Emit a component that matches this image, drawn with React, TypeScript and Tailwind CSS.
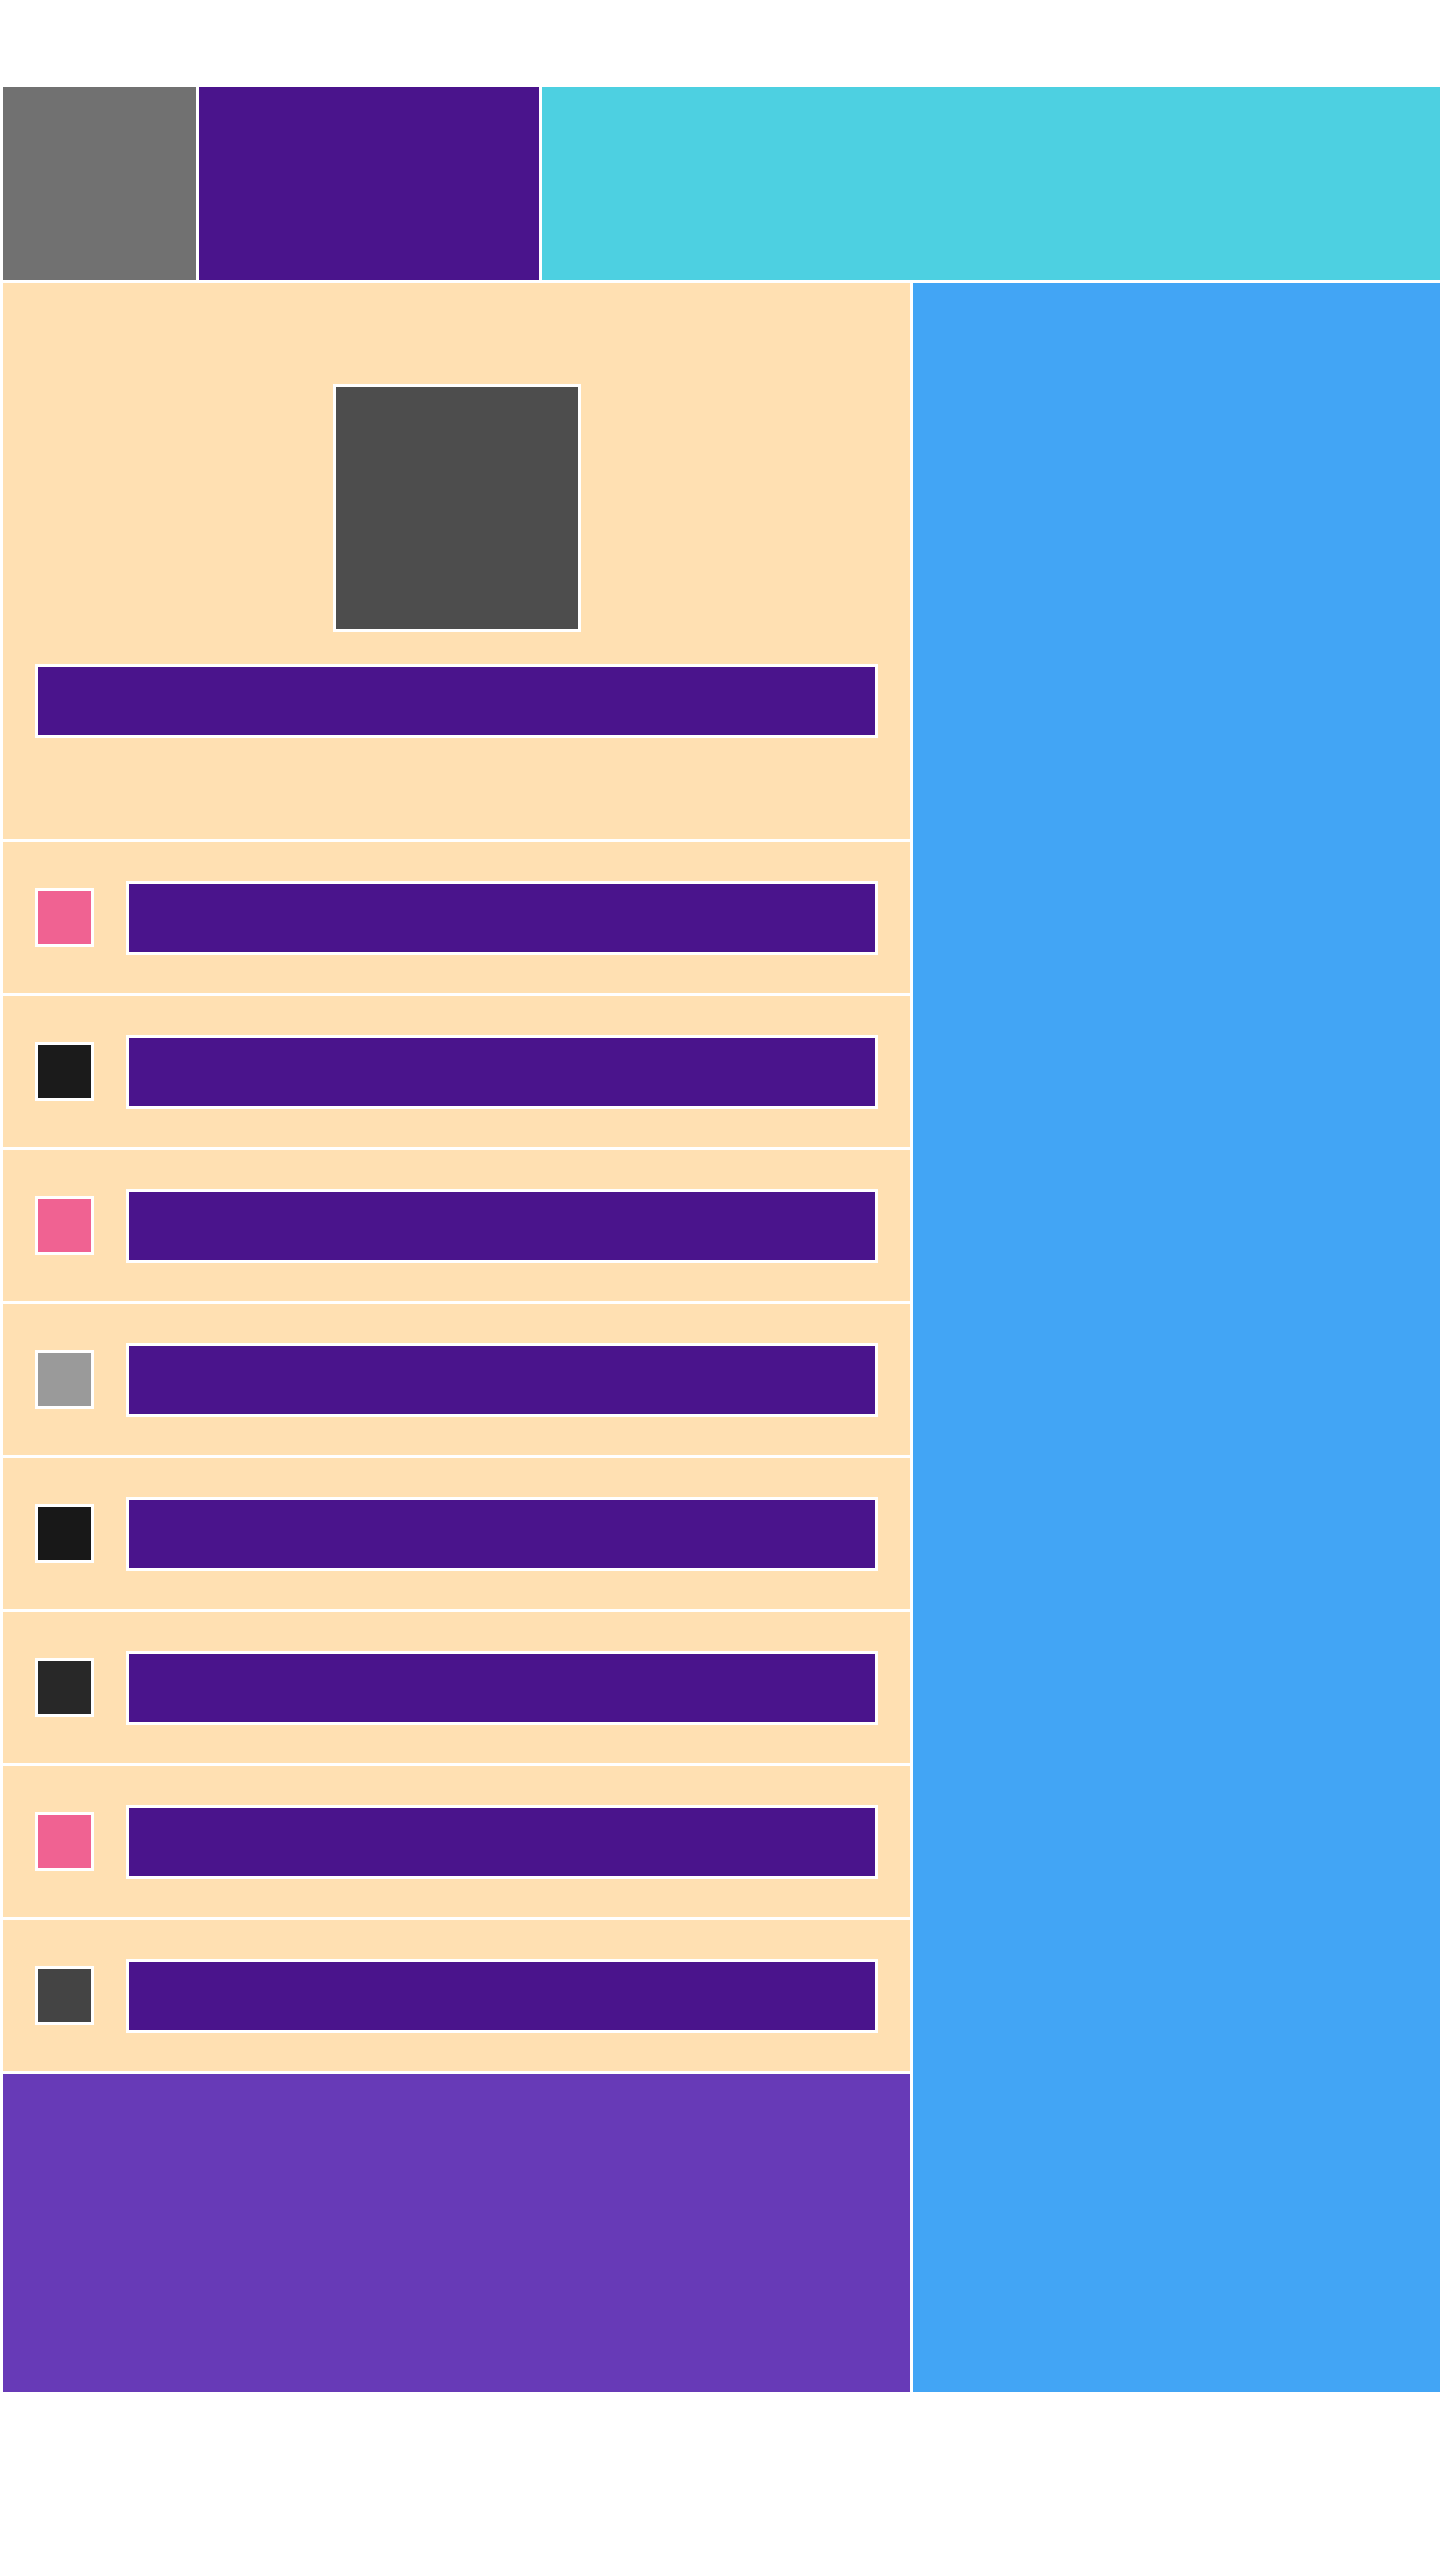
const swatches = ["#f06292", "#1b1b1b", "#f06292", "#9a9a9a", "#181818", "#282828", "#f06292", "#444444"];

const Row = ({ color }: { color: string }) => {
  return (
    <div className="flex items-center h-[151px] bg-[#ffe0b2] pl-[32px] pr-[32px]">
      <div className="w-[59px] h-[59px] border-[3px] border-white" style={{ backgroundColor: color }}></div>
      <div className="flex-1 ml-[32px] h-[74px] bg-[#4a148c] border-[3px] border-white"></div>
    </div>
  );
};

export default function App() {
  return (
    <div className="w-[1440px] h-[2560px] bg-white pt-[87px] pl-[3px] flex flex-col gap-[3px]">
      <div className="flex gap-[3px] h-[193px]">
        <div className="w-[193px] bg-[#717171]"></div>
        <div className="w-[340px] bg-[#4a148c]"></div>
        <div className="flex-1 bg-[#4dd0e1]"></div>
      </div>
      <div className="flex gap-[3px] h-[2109px]">
        <div className="w-[907px] flex flex-col gap-[3px]">
          <div className="h-[556px] bg-[#ffe0b2] flex flex-col items-center pt-[101px] px-[32px]">
            <div className="w-[248px] h-[248px] bg-[#4d4d4d] border-[3px] border-white"></div>
            <div className="mt-[32px] w-full h-[74px] bg-[#4a148c] border-[3px] border-white"></div>
          </div>
          {swatches.map((c, i) => (
            <Row key={i} color={c} />
          ))}
          <div className="flex-1 bg-[#673ab7]"></div>
        </div>
        <div className="flex-1 bg-[#42a5f5]"></div>
      </div>
    </div>
  );
}
